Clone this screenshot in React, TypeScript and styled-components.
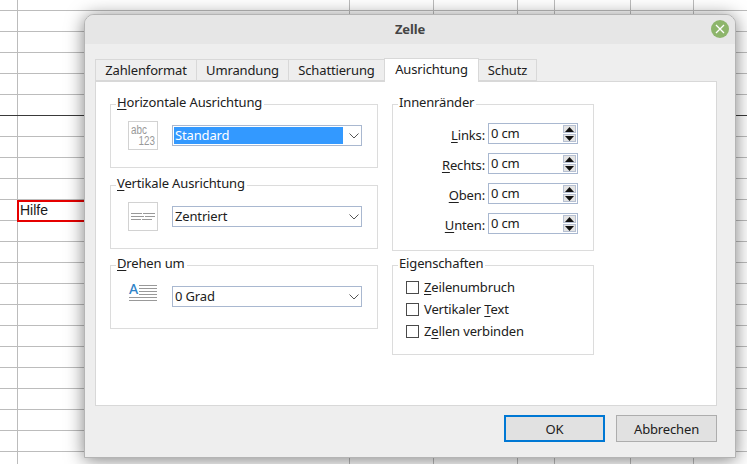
import React from 'react';
import styled, { createGlobalStyle } from 'styled-components';

const GlobalStyle = createGlobalStyle`
  * { box-sizing: border-box; }
  html, body { margin: 0; padding: 0; }
  body { width: 747px; height: 464px; overflow: hidden; background: #fff; }
`;

// spreadsheet behind the dialog: 21px rows, dark line on the page break row
const Sheet = styled.div`
  position: relative;
  width: 747px;
  height: 464px;
  overflow: hidden;
  background-color: #fff;
  background-image:
    linear-gradient(#3a3a3a, #3a3a3a),
    repeating-linear-gradient(to bottom, transparent 0, transparent 20px, #bcbcbc 20px, #bcbcbc 21px),
    linear-gradient(#bcbcbc, #bcbcbc),
    linear-gradient(#bcbcbc, #bcbcbc),
    linear-gradient(#bcbcbc, #bcbcbc),
    linear-gradient(#bcbcbc, #bcbcbc),
    linear-gradient(#bcbcbc, #bcbcbc),
    linear-gradient(#bcbcbc, #bcbcbc),
    linear-gradient(#bcbcbc, #bcbcbc);
  background-size: 747px 1px, 747px 484px, 1px 464px, 1px 464px, 1px 464px, 1px 464px, 1px 464px, 1px 464px, 1px 464px;
  background-position: 0 115px, 0 -10px, 17px 0, 349px 0, 433px 0, 517px 0, 554px 0, 630px 0, 693px 0;
  background-repeat: no-repeat;
`;

const SelectedCell = styled.div`
  position: absolute;
  left: 17px;
  top: 200px;
  width: 80px;
  height: 22px;
  border: 2px solid #e60000;
  padding-left: 1px;
  font: 14px/17px "Liberation Sans", Arial, sans-serif;
  color: #1a1a1a;
  background: #fff;
`;

const Dialog = styled.div`
  position: absolute;
  left: 84px;
  top: 14px;
  width: 652px;
  height: 444px;
  display: flex;
  flex-direction: column;
  background: #eeeeee;
  border: 1px solid #b4b4b4;
  border-radius: 10px 10px 0 0;
  box-shadow: 0 2px 18px rgba(0, 0, 0, 0.5);
  font: 13px/18px "Noto Sans", sans-serif;
  letter-spacing: -0.15px;
  color: #202020;
`;

const TitleBar = styled.div`
  position: relative;
  flex: none;
  height: 29px;
  display: flex;
  align-items: center;
  justify-content: center;
  padding-bottom: 1px;
  background: #e6e6e6;
  border-radius: 9px 9px 0 0;
  font-weight: 700;
  color: #444;
`;

const CloseButton = styled.div`
  position: absolute;
  right: 6px;
  top: 5px;
  width: 18px;
  height: 18px;
  border-radius: 50%;
  background: #8db56b;
  display: flex;
  align-items: center;
  justify-content: center;
`;

const Content = styled.div`
  flex: 1;
  display: flex;
  flex-direction: column;
  padding: 15px 18px 16px 10px;
`;

const TabBar = styled.div`
  display: flex;
  align-items: flex-end;
  height: 22px;
  position: relative;
  z-index: 1;
`;

const Tab = styled.div<{ $active?: boolean; $width: number }>`
  width: ${p => p.$width}px;
  height: ${p => (p.$active ? 24 : 22)}px;
  margin-bottom: ${p => (p.$active ? -1 : 0)}px;
  margin-left: -1px;
  display: flex;
  align-items: center;
  justify-content: center;
  padding-bottom: ${p => (p.$active ? 3 : 0)}px;
  border: 1px solid #d8d8d8;
  border-bottom: ${p => (p.$active ? 'none' : '1px solid #d8d8d8')};
  background: ${p => (p.$active ? '#fff' : '#eeeeee')};
  &:first-child { margin-left: 0; }
`;

const Panel = styled.div`
  width: 622px;
  height: 325px;
  display: flex;
  gap: 14px;
  padding: 22px 0 0 14px;
  background: #fff;
  border: 1px solid #d8d8d8;
`;

const Column = styled.div<{ $width: number; $gap: number }>`
  width: ${p => p.$width}px;
  display: flex;
  flex-direction: column;
  gap: ${p => p.$gap}px;
`;

const Group = styled.div<{ $height: number; $nudge?: boolean }>`
  position: relative;
  height: ${p => p.$height}px;
  margin-top: ${p => (p.$nudge ? 1 : 0)}px;
  border: 1px solid #dcdcdc;
`;

const GroupTitle = styled.div`
  position: absolute;
  left: 5px;
  top: -12px;
  padding: 0 2px 0 1px;
  background: #fff;
  white-space: nowrap;
`;

const Key = styled.span`
  text-decoration: underline;
  text-underline-offset: 2px;
`;

const SelectRow = styled.div`
  display: flex;
  align-items: center;
  padding: 16px 15px 0 17px;
`;

const IconBox = styled.div`
  flex: none;
  width: 30px;
  height: 29px;
  border: 1px solid #d2d2d2;
  color: #999;
  font: 12px/11px "Liberation Sans", sans-serif;
  letter-spacing: 0;
  display: flex;
  flex-direction: column;
  justify-content: center;
  padding: 0 2px;
`;

const IconLine = styled.span<{ $end?: boolean }>`
  align-self: ${p => (p.$end ? 'flex-end' : 'flex-start')};
  transform: scaleX(0.82);
  transform-origin: ${p => (p.$end ? 'right' : 'left')} center;
`;

const PlainIcon = styled.div`
  flex: none;
  width: 30px;
  height: 29px;
  svg { display: block; margin-top: -3px; }
`;

const Select = styled.div`
  flex: none;
  margin-left: 14px;
  width: 190px;
  height: 21px;
  display: flex;
  align-items: center;
  padding: 1px;
  border: 1px solid #a9b8d0;
  background: #fff;
`;

const SelectValue = styled.div<{ $selected?: boolean }>`
  flex: 1;
  height: 17px;
  line-height: 17px;
  padding-left: 1px;
  background: ${p => (p.$selected ? '#3399ff' : 'transparent')};
  color: ${p => (p.$selected ? '#fff' : '#202020')};
`;

const Arrow = styled.div`
  flex: none;
  width: 17px;
  padding-left: 4px;
  display: flex;
  justify-content: center;
`;

const SpinList = styled.div`
  display: flex;
  flex-direction: column;
  gap: 9px;
  padding: 18px 15px 0 0;
`;

const SpinRow = styled.div`
  display: flex;
  align-items: center;
  justify-content: flex-end;
  gap: 3px;
`;

const SpinLabel = styled.span`
  margin-top: 2px;
`;

const SpinField = styled.div`
  position: relative;
  width: 90px;
  height: 21px;
  padding-left: 2px;
  line-height: 18px;
  border: 1px solid #a9b8d0;
  background: #fff;
`;

const SpinButtons = styled.div`
  position: absolute;
  right: 1px;
  top: 1px;
  display: flex;
  flex-direction: column;
  gap: 1px;
`;

const SpinButton = styled.div`
  width: 13px;
  height: 8px;
  background: #e4e4e4;
  border: 1px solid #b6c0d2;
  display: flex;
  align-items: center;
  justify-content: center;
`;

const CheckList = styled.div`
  display: flex;
  flex-direction: column;
  gap: 4px;
  padding: 12px 0 0 13px;
`;

const CheckRow = styled.div`
  display: flex;
  align-items: center;
  gap: 5px;
  height: 18px;
`;

const CheckBox = styled.div`
  width: 13px;
  height: 13px;
  border: 1px solid #4a4a4a;
  background: #fff;
`;

const Footer = styled.div`
  display: flex;
  justify-content: flex-end;
  gap: 11px;
  padding-top: 9px;
`;

const Button = styled.div<{ $default?: boolean }>`
  width: 101px;
  height: 27px;
  display: flex;
  align-items: center;
  justify-content: center;
  background: #e1e1e1;
  border: ${p => (p.$default ? '2px solid #0078d4' : '1px solid #adadad')};
`;

const Chevron = () => (
  <svg width="10" height="6" viewBox="0 0 10 6" fill="none">
    <path d="M.5.5L5 5 9.5.5" stroke="#555" strokeWidth="1" />
  </svg>
);

const Triangle = ({ up }: { up?: boolean }) => (
  <svg width="9" height="5" viewBox="0 0 9 5">
    <path d={up ? 'M4.5 0L9 5H0z' : 'M0 0h9L4.5 5z'} fill="#111" />
  </svg>
);

const CenterLines = () => (
  <svg width="26" height="27" viewBox="0 0 26 27">
    <path d="M0 10.5h11M12 10.5h12M0 13.5h13M14 13.5h10M0 16.5h10M11 16.5h10" stroke="#999" />
  </svg>
);

const RotateGlyph = () => (
  <svg width="30" height="26" viewBox="0 -3 30 26">
    <text x="1" y="12" fontFamily="Noto Sans" fontSize="14" fontWeight="500" fill="#2f83c8">A</text>
    <path d="M11 3.5h18M11 6.5h18M11 9.5h18M11 12.5h18M1 15.5h28M1 18.5h28" stroke="#999" />
  </svg>
);

const margins = [
  { key: 'L', post: 'inks:' },
  { key: 'R', post: 'echts:' },
  { key: 'O', post: 'ben:' },
  { key: 'U', post: 'nten:' },
];

const App: React.FC = () => {
  return (
    <Sheet>
      <GlobalStyle />
      <SelectedCell>Hilfe</SelectedCell>
      <Dialog>
        <TitleBar>
          Zelle
          <CloseButton>
            <svg width="10" height="10" viewBox="0 0 10 10">
              <path d="M1 1l8 8M9 1l-8 8" stroke="#fff" strokeWidth="1.3" />
            </svg>
          </CloseButton>
        </TitleBar>
        <Content>
          <TabBar>
            <Tab $width={102}>Zahlenformat</Tab>
            <Tab $width={93}>Umrandung</Tab>
            <Tab $width={97}>Schattierung</Tab>
            <Tab $width={95} $active>Ausrichtung</Tab>
            <Tab $width={59}>Schutz</Tab>
          </TabBar>
          <Panel>
            <Column $width={268} $gap={16}>
              <Group $height={64}>
                <GroupTitle><Key>H</Key>orizontale Ausrichtung</GroupTitle>
                <SelectRow>
                  <IconBox>
                    <IconLine>abc</IconLine>
                    <IconLine $end>123</IconLine>
                  </IconBox>
                  <Select>
                    <SelectValue $selected>Standard</SelectValue>
                    <Arrow><Chevron /></Arrow>
                  </Select>
                </SelectRow>
              </Group>
              <Group $height={64} $nudge>
                <GroupTitle><Key>V</Key>ertikale Ausrichtung</GroupTitle>
                <SelectRow>
                  <IconBox>
                    <CenterLines />
                  </IconBox>
                  <Select>
                    <SelectValue>Zentriert</SelectValue>
                    <Arrow><Chevron /></Arrow>
                  </Select>
                </SelectRow>
              </Group>
              <Group $height={64}>
                <GroupTitle><Key>D</Key>rehen um</GroupTitle>
                <SelectRow>
                  <PlainIcon>
                    <RotateGlyph />
                  </PlainIcon>
                  <Select>
                    <SelectValue>0 Grad</SelectValue>
                    <Arrow><Chevron /></Arrow>
                  </Select>
                </SelectRow>
              </Group>
            </Column>
            <Column $width={202} $gap={14}>
              <Group $height={147}>
                <GroupTitle>Innenränder</GroupTitle>
                <SpinList>
                  {margins.map(m => (
                    <SpinRow key={m.key}>
                      <SpinLabel><Key>{m.key}</Key>{m.post}</SpinLabel>
                      <SpinField>
                        0 cm
                        <SpinButtons>
                          <SpinButton><Triangle up /></SpinButton>
                          <SpinButton><Triangle /></SpinButton>
                        </SpinButtons>
                      </SpinField>
                    </SpinRow>
                  ))}
                </SpinList>
              </Group>
              <Group $height={90}>
                <GroupTitle>Eigenschaften</GroupTitle>
                <CheckList>
                  <CheckRow><CheckBox /><span><Key>Z</Key>eilenumbruch</span></CheckRow>
                  <CheckRow><CheckBox /><span>Vertikaler <Key>T</Key>ext</span></CheckRow>
                  <CheckRow><CheckBox /><span>Z<Key>e</Key>llen verbinden</span></CheckRow>
                </CheckList>
              </Group>
            </Column>
          </Panel>
          <Footer>
            <Button $default>OK</Button>
            <Button>Abbrechen</Button>
          </Footer>
        </Content>
      </Dialog>
    </Sheet>
  );
};

export default App;
